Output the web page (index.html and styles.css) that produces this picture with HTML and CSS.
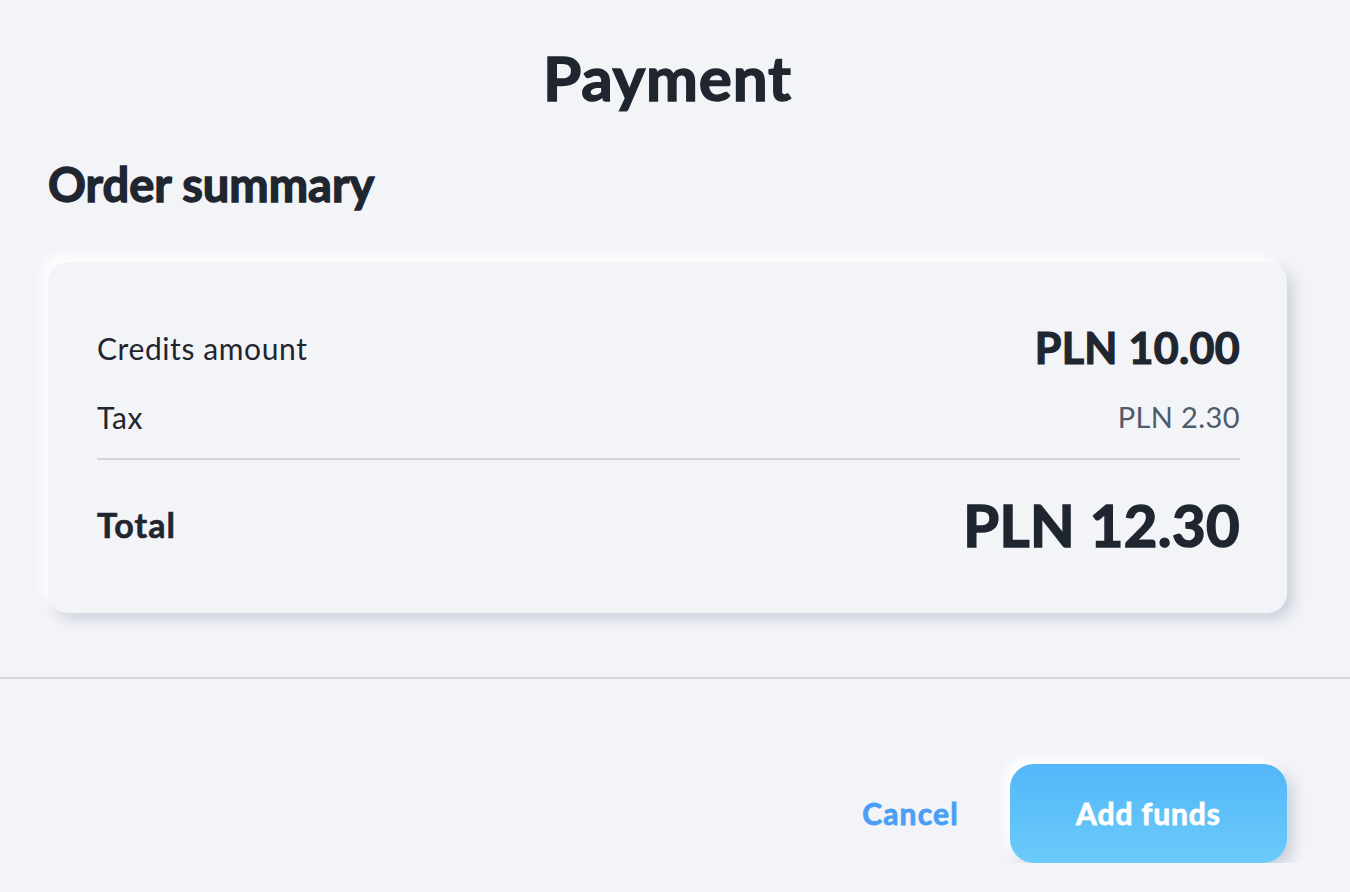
FILE: index.html
```html
<!DOCTYPE html>
<html lang="en">
<head>
    <meta charset="UTF-8">
    <meta name="viewport" content="width=device-width, initial-scale=1.0">
    <title>Payment</title>
    <link rel="stylesheet" href="styles.css">
</head>
<body>
    <div class="payment">
        <div class="content">
            <h1 class="heavy">Payment</h1>

            <h2 class="heavy">Order summary</h2>

            <!-- Summary card -->
            <div class="summary">
                <div class="row row-credits">
                    <span class="label">Credits amount</span>
                    <span class="value heavy">PLN 10.00</span>
                </div>
                <div class="row row-tax">
                    <span class="label">Tax</span>
                    <span class="value">PLN 2.30</span>
                </div>
                <div class="divider"></div>
                <div class="row row-total">
                    <span class="label">Total</span>
                    <span class="value heavy">PLN 12.30</span>
                </div>
            </div>
        </div>

        <div class="separator"></div>

        <!-- Actions -->
        <div class="actions">
            <button type="button" class="btn-cancel">Cancel</button>
            <button type="button" class="btn-primary">Add funds</button>
        </div>
    </div>
</body>
</html>
```

FILE: styles.css
```css
body {
    font-family: Lato, "Noto Sans", sans-serif;
    background-color: #f3f4f8;
    color: #1f262f;
    margin: 0;
    padding: 0;
}

.heavy {
    font-weight: 700;
    -webkit-text-stroke: 1.4px currentColor;
}

.content {
    padding: 0 63px 0 48px;
}

h1 {
    text-align: center;
    font-size: 62px;
    line-height: 1.2;
    margin: 0;
    padding-top: 40px;
    letter-spacing: 0.8px;
}

h2 {
    font-size: 47px;
    line-height: 1.2;
    margin: 42px 0 0;
    -webkit-text-stroke-width: 1.2px;
}

.summary {
    margin-top: 49px;
    padding: 60px 47px 53px 49px;
    border-radius: 20px;
    background-color: #f3f4f8;
    box-shadow: -6px -6px 12px #ffffff, 6px 6px 14px rgba(150, 160, 180, 0.45);
}

.row {
    display: flex;
    justify-content: space-between;
    align-items: center;
    line-height: 1.2;
}

.label {
    font-size: 30px;
    letter-spacing: 0.6px;
}

.row-credits .value {
    font-size: 43px;
    letter-spacing: 0.3px;
    -webkit-text-stroke-width: 1.2px;
}

.row-tax {
    margin-top: 26px;
}

.row-tax .value {
    font-size: 29px;
    letter-spacing: 0.4px;
    color: #4f5b6b;
}

.divider {
    height: 2px;
    background-color: #d3d5db;
    margin-top: 23px;
}

.row-total {
    margin-top: 30px;
}

.row-total .label {
    font-size: 34px;
    font-weight: 700;
    letter-spacing: 1px;
    -webkit-text-stroke: 0.6px currentColor;
}

.row-total .value {
    font-size: 58px;
    letter-spacing: 0.4px;
    -webkit-text-stroke-width: 1.6px;
}

.separator {
    height: 2px;
    background-color: #d3d5db;
    margin-top: 64px;
}

.actions {
    display: flex;
    justify-content: flex-end;
    align-items: center;
    gap: 51px;
    padding: 85px 63px 0 0;
}

button {
    font-family: inherit;
    border: none;
    cursor: pointer;
}

.btn-cancel {
    background: none;
    padding: 0;
    color: #4a9ff5;
    font-size: 30px;
    font-weight: 700;
    letter-spacing: 1.2px;
    -webkit-text-stroke: 0.8px currentColor;
}

.btn-primary {
    width: 277px;
    height: 99px;
    border-radius: 24px;
    background: linear-gradient(to bottom, #53b6f8, #6bcbfb);
    color: #fff;
    font-size: 30px;
    font-weight: 700;
    letter-spacing: 0.9px;
    -webkit-text-stroke: 0.8px currentColor;
    box-shadow: -6px -6px 12px #ffffff, 6px 6px 14px rgba(150, 160, 180, 0.45);
}
```
